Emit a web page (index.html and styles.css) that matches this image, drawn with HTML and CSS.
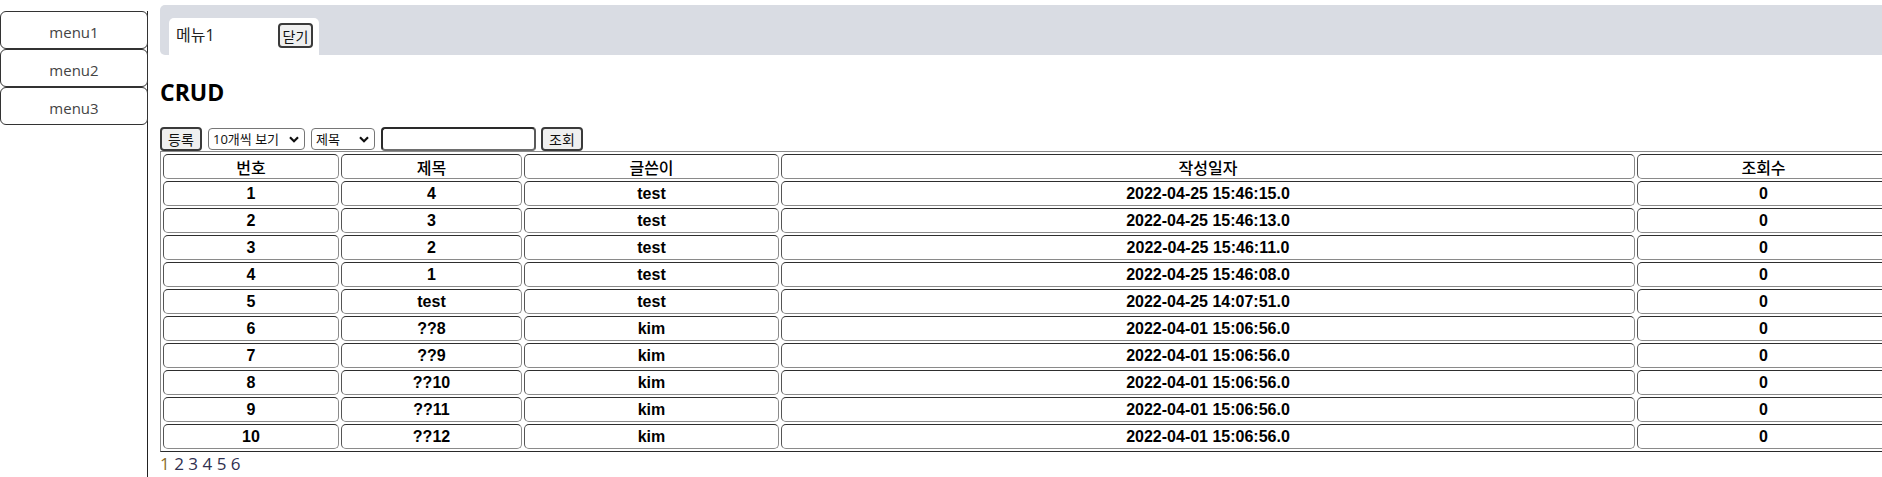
FILE: index.html
```html
<!DOCTYPE html>
<html lang="ko">
<head>
<meta charset="utf-8">
<title>CRUD</title>
<link rel="stylesheet" href="styles.css">
</head>
<body>
<div class="layout">
  <nav class="sidebar">
    <button class="menu-btn">menu1</button>
    <button class="menu-btn">menu2</button>
    <button class="menu-btn">menu3</button>
  </nav>
  <main class="main">
    <div class="tabbar">
      <div class="tab">
        <span class="tab-title">메뉴1</span>
        <button class="btn btn-close">닫기</button>
      </div>
    </div>
    <h2 class="title">CRUD</h2>
    <div class="controls">
      <button class="btn btn-action">등록</button>
      <select class="sel sel-count">
        <option>10개씩 보기</option>
      </select>
      <select class="sel sel-field">
        <option>제목</option>
      </select>
      <input class="search" type="text">
      <button class="btn btn-action">조회</button>
    </div>
    <table class="grid">
      <thead>
        <tr>
          <th class="c-no">번호</th>
          <th class="c-title">제목</th>
          <th class="c-writer">글쓴이</th>
          <th class="c-date">작성일자</th>
          <th class="c-hit">조회수</th>
        </tr>
      </thead>
      <tbody>
        <tr><td>1</td><td>4</td><td>test</td><td>2022-04-25 15:46:15.0</td><td>0</td></tr>
        <tr><td>2</td><td>3</td><td>test</td><td>2022-04-25 15:46:13.0</td><td>0</td></tr>
        <tr><td>3</td><td>2</td><td>test</td><td>2022-04-25 15:46:11.0</td><td>0</td></tr>
        <tr><td>4</td><td>1</td><td>test</td><td>2022-04-25 15:46:08.0</td><td>0</td></tr>
        <tr><td>5</td><td>test</td><td>test</td><td>2022-04-25 14:07:51.0</td><td>0</td></tr>
        <tr><td>6</td><td>??8</td><td>kim</td><td>2022-04-01 15:06:56.0</td><td>0</td></tr>
        <tr><td>7</td><td>??9</td><td>kim</td><td>2022-04-01 15:06:56.0</td><td>0</td></tr>
        <tr><td>8</td><td>??10</td><td>kim</td><td>2022-04-01 15:06:56.0</td><td>0</td></tr>
        <tr><td>9</td><td>??11</td><td>kim</td><td>2022-04-01 15:06:56.0</td><td>0</td></tr>
        <tr><td>10</td><td>??12</td><td>kim</td><td>2022-04-01 15:06:56.0</td><td>0</td></tr>
      </tbody>
    </table>
    <div class="pager"><a class="page current">1</a> <a class="page">2</a> <a class="page">3</a> <a class="page">4</a> <a class="page">5</a> <a class="page">6</a></div>
  </main>
</div>
</body>
</html>
```
FILE: styles.css
```css
html, body {
  margin: 0;
  padding: 0;
  overflow: hidden;
  background: #fff;
}

body {
  font-family: "Open Sans", "Noto Sans CJK KR", sans-serif;
  color: #111;
}

.layout {
  display: flex;
  align-items: stretch;
  min-height: 477px;
}

.sidebar {
  flex: 0 0 148px;
  width: 148px;
  box-sizing: border-box;
  margin-top: 11px;
  border-right: 1px solid #222;
  display: flex;
  flex-direction: column;
}

.menu-btn {
  width: 148px;
  height: 38px;
  box-sizing: border-box;
  background: #fff;
  border: 1px solid #333;
  border-radius: 6px;
  font-family: "Open Sans", "Noto Sans CJK KR", sans-serif;
  font-size: 15px;
  color: #444;
  padding: 3px 0 0 0;
}

.main {
  flex: 1 1 auto;
  min-width: 0;
  margin-left: 12px;
}

.tabbar {
  margin-top: 5px;
  height: 50px;
  box-sizing: border-box;
  background: #d9dce3;
  border-radius: 5px 0 0 5px;
  padding: 13px 0 0 9px;
  display: flex;
  align-items: flex-end;
}

.tab {
  width: 150px;
  height: 37px;
  box-sizing: border-box;
  background: #fff;
  border-radius: 5px 5px 0 0;
  display: flex;
  align-items: center;
  justify-content: space-between;
  padding: 0 6px 2px 7px;
}

.tab-title {
  font-family: "Open Sans", "Noto Sans CJK KR", sans-serif;
  font-size: 16px;
  color: #222;
  line-height: 20px;
  margin-top: -2px;
}

.btn {
  box-sizing: border-box;
  background: #efefef;
  border: 2px solid #3a3a3a;
  border-radius: 4px;
  font-family: "Noto Sans CJK KR", sans-serif;
  color: #111;
  padding: 0;
  line-height: 18px;
}

.btn-close {
  width: 35px;
  height: 25px;
  font-size: 14px;
}

.btn-action {
  width: 42px;
  height: 24px;
  font-size: 14px;
}

.title {
  margin: 22px 0 20px 0;
  font-family: "Open Sans", "Noto Sans CJK KR", sans-serif;
  font-size: 23px;
  line-height: 30px;
  font-weight: 700;
  color: #000;
}

.controls {
  display: flex;
  align-items: center;
  gap: 6px;
  height: 24px;
}

.sel {
  appearance: none;
  -webkit-appearance: none;
  box-sizing: border-box;
  height: 22px;
  border: 1px solid #767676;
  border-radius: 4px;
  background-color: #fff;
  background-image: url("data:image/svg+xml;utf8,<svg xmlns='http://www.w3.org/2000/svg' width='10' height='7' viewBox='0 0 10 7'><path d='M1 1.2 L5 5.2 L9 1.2' fill='none' stroke='%23111' stroke-width='2.2'/></svg>");
  background-repeat: no-repeat;
  background-position: right 5px center;
  font-family: "Open Sans", "Noto Sans CJK KR", sans-serif;
  font-size: 13px;
  color: #111;
  padding: 0 0 0 4px;
  line-height: 18px;
}

.sel-count {
  width: 97px;
}

.sel-field {
  width: 64px;
}

.search {
  box-sizing: border-box;
  width: 155px;
  height: 24px;
  border: 2px solid;
  border-color: #2a2a2a #5a5a5a #6e6e6e #2a2a2a;
  border-radius: 4px;
  padding: 0 4px;
  margin-right: -1px;
}

.grid {
  table-layout: fixed;
  width: 1732px;
  border-collapse: separate;
  border-spacing: 2px;
  border: 1px solid;
  border-color: #8a8a8a #2a2a2a #2a2a2a #8a8a8a;
  font-family: "Liberation Sans", "Noto Sans CJK KR", sans-serif;
  font-size: 16px;
  color: #000;
}

.grid th,
.grid td {
  height: 23px;
  padding: 0;
  border: 1px solid;
  border-color: #2e2e2e #8a8a8a #8a8a8a #555;
  border-radius: 5px;
  text-align: center;
  vertical-align: middle;
  line-height: 20px;
  font-weight: 700;
}

.grid th {
  font-family: "Noto Sans CJK KR", sans-serif;
  font-weight: 500;
  font-size: 16px;
}

.c-no { width: 174px; }
.c-title { width: 179px; }
.c-writer { width: 253px; }
.c-date { width: 852px; }
.c-hit { width: 251px; }

.pager {
  height: 24px;
  font-family: "Open Sans", "Noto Sans CJK KR", sans-serif;
  font-size: 17px;
  line-height: 24px;
  white-space: nowrap;
}

.page {
  color: #2f3050;
}

.page.current {
  color: #8a6d2e;
}
```
